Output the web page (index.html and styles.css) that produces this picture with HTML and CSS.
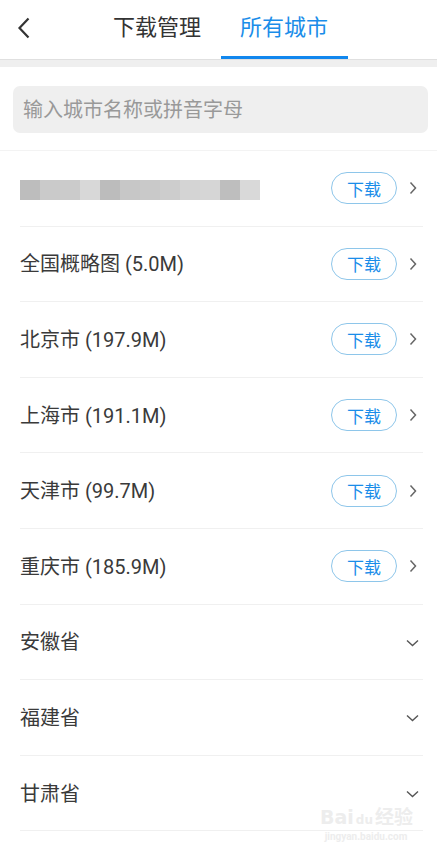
FILE: index.html
```html
<!DOCTYPE html>
<html lang="zh-CN">
  <head>
    <meta charset="UTF-8" />
    <title>离线地图</title>
    <link rel="stylesheet" href="styles.css">
  </head>
  <body>
    <div class="header">
      <div class="header__back">
        <svg width="14" height="22" viewBox="0 0 14 22">
          <polyline points="11.5,1.5 2.5,11 11.5,20.5" fill="none" stroke="#333" stroke-width="2.2" />
        </svg>
      </div>
      <div class="tabs">
        <div class="tabs__item">下载管理</div>
        <div class="tabs__item tabs__item--active">所有城市</div>
      </div>
      <div></div>
    </div>
    <div class="gap"></div>

    <div class="search">
      <input class="search__input" type="text" placeholder="输入城市名称或拼音字母">
    </div>

    <div class="list">
      <div class="row">
        <div class="row__blur">
          <span style="background: #bdbdbd"></span>
          <span style="background: #cacaca"></span>
          <span style="background: #cbcbcb"></span>
          <span style="background: #d8d8d8"></span>
          <span style="background: #bcbcbc"></span>
          <span style="background: #c7c7c7"></span>
          <span style="background: #c9c9c9"></span>
          <span style="background: #cdcdcd"></span>
          <span style="background: #d4d4d4"></span>
          <span style="background: #d6d6d6"></span>
          <span style="background: #bebebe"></span>
          <span style="background: #d9d9d9"></span>
        </div>
        <button class="row__btn">下载</button>
        <svg class="row__more" width="8" height="14" viewBox="0 0 8 14">
          <polyline points="1.5,1.5 6.5,7 1.5,12.5" fill="none" stroke="#666" stroke-width="1.5" />
        </svg>
      </div>
      <div class="row">
        <div class="row__name">全国概略图 (5.0M)</div>
        <button class="row__btn">下载</button>
        <svg class="row__more" width="8" height="14" viewBox="0 0 8 14">
          <polyline points="1.5,1.5 6.5,7 1.5,12.5" fill="none" stroke="#666" stroke-width="1.5" />
        </svg>
      </div>
      <div class="row">
        <div class="row__name">北京市 (197.9M)</div>
        <button class="row__btn">下载</button>
        <svg class="row__more" width="8" height="14" viewBox="0 0 8 14">
          <polyline points="1.5,1.5 6.5,7 1.5,12.5" fill="none" stroke="#666" stroke-width="1.5" />
        </svg>
      </div>
      <div class="row">
        <div class="row__name">上海市 (191.1M)</div>
        <button class="row__btn">下载</button>
        <svg class="row__more" width="8" height="14" viewBox="0 0 8 14">
          <polyline points="1.5,1.5 6.5,7 1.5,12.5" fill="none" stroke="#666" stroke-width="1.5" />
        </svg>
      </div>
      <div class="row">
        <div class="row__name">天津市 (99.7M)</div>
        <button class="row__btn">下载</button>
        <svg class="row__more" width="8" height="14" viewBox="0 0 8 14">
          <polyline points="1.5,1.5 6.5,7 1.5,12.5" fill="none" stroke="#666" stroke-width="1.5" />
        </svg>
      </div>
      <div class="row">
        <div class="row__name">重庆市 (185.9M)</div>
        <button class="row__btn">下载</button>
        <svg class="row__more" width="8" height="14" viewBox="0 0 8 14">
          <polyline points="1.5,1.5 6.5,7 1.5,12.5" fill="none" stroke="#666" stroke-width="1.5" />
        </svg>
      </div>
      <div class="row">
        <div class="row__name">安徽省</div>
        <svg class="row__expand" width="13" height="8" viewBox="0 0 13 8">
          <polyline points="1,1.5 6.5,6.5 12,1.5" fill="none" stroke="#555" stroke-width="1.4" />
        </svg>
      </div>
      <div class="row">
        <div class="row__name">福建省</div>
        <svg class="row__expand" width="13" height="8" viewBox="0 0 13 8">
          <polyline points="1,1.5 6.5,6.5 12,1.5" fill="none" stroke="#555" stroke-width="1.4" />
        </svg>
      </div>
      <div class="row">
        <div class="row__name">甘肃省</div>
        <svg class="row__expand" width="13" height="8" viewBox="0 0 13 8">
          <polyline points="1,1.5 6.5,6.5 12,1.5" fill="none" stroke="#555" stroke-width="1.4" />
        </svg>
      </div>
    </div>

    <div class="watermark">
      <div class="watermark__logo">Bai<span class="watermark__paw">du</span>经验</div>
      <div class="watermark__url">jingyan.baidu.com</div>
    </div>
  </body>
</html>
```

FILE: styles.css
```css
html,
body {
  margin: 0;
  padding: 0;
}

body {
  position: relative;
  width: 437px;
  min-height: 853px;
  background-color: #fff;
  font-family: "Roboto", "Noto Sans CJK SC", sans-serif;
  color: #333;
  overflow: hidden;
}

.header {
  display: grid;
  grid-template-columns: 1fr auto 1fr;
  height: 59px;
  padding-left: 4px;
  box-sizing: border-box;
}

.header__back {
  display: flex;
  align-items: center;
  padding-left: 13px;
  padding-bottom: 3px;
}

.tabs {
  display: flex;
}

.tabs__item {
  padding: 0 19.5px;
  font-size: 22px;
  line-height: 56px;
  height: 56px;
  color: #333;
  border-bottom: 3px solid transparent;
}

.tabs__item--active {
  color: #1a8de9;
  border-bottom-color: #1187ee;
}

.gap {
  height: 7px;
  background-color: #efefef;
  border-top: 1px solid #e0e0e0;
}

.search {
  padding: 19px 9px 17px 13px;
  border-bottom: 1px solid #f3f3f3;
}

.search__input {
  display: block;
  width: 100%;
  height: 47px;
  box-sizing: border-box;
  border: none;
  outline: none;
  border-radius: 7px;
  background-color: #efefef;
  padding: 0 10px;
  font-family: inherit;
  font-size: 20px;
  color: #333;
}

.search__input::placeholder {
  color: #999;
}

.list {
  margin: 0 14px 0 20px;
}

.row {
  display: flex;
  align-items: center;
  height: 75.6px;
  box-sizing: border-box;
  border-bottom: 1px solid #f0f0f0;
}

.row__name {
  flex: 1;
  font-size: 20px;
  color: #3a3a3a;
  padding-bottom: 2px;
}

.row__blur {
  flex: 1;
  display: flex;
  padding-top: 3px;
}

.row__blur span {
  width: 20px;
  height: 20px;
}

.row__btn {
  width: 66px;
  height: 32px;
  border: 1px solid #8ec6ea;
  border-radius: 16px;
  background-color: #fff;
  color: #1a8de9;
  font-family: inherit;
  font-size: 17px;
  padding: 0;
  margin-right: 12px;
}

.row__more {
  margin-right: 6px;
}

.row__expand {
  margin-right: 4px;
  margin-top: 2px;
}

.watermark {
  position: absolute;
  left: 320px;
  top: 806px;
  width: 92px;
  text-align: center;
  color: #ededed;
}

.watermark__logo {
  font-family: "DejaVu Sans", "Noto Sans CJK SC", sans-serif;
  font-size: 19px;
  font-weight: bold;
  line-height: 22px;
  white-space: nowrap;
}

.watermark__paw {
  font-size: 12px;
  margin: 0 2px;
}

.watermark__url {
  font-size: 10px;
  line-height: 12px;
  font-weight: bold;
  white-space: nowrap;
}
```
